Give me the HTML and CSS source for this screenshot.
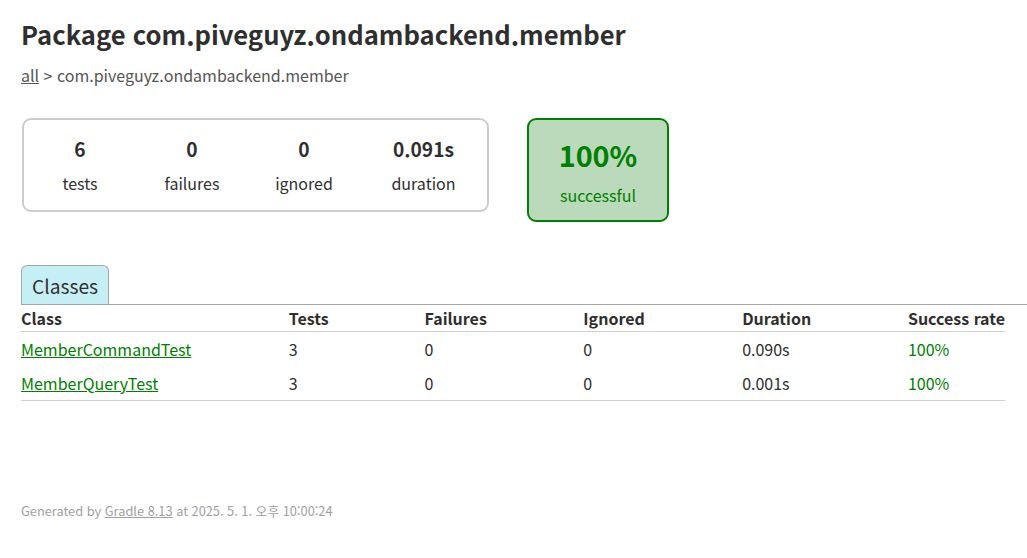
FILE: index.html
```html
<!DOCTYPE html>
<html lang="ko">
<head>
<meta charset="utf-8">
<title>Test results - Package com.piveguyz.ondambackend.member</title>
<link rel="stylesheet" href="styles.css">
</head>
<body>
<div class="content">
  <h1 class="title">Package com.piveguyz.ondambackend.member</h1>
  <div class="breadcrumbs"><a href="#">all</a> &gt; com.piveguyz.ondambackend.member</div>
  <div class="summary">
    <div class="summary-box">
      <div class="counter"><div class="num">6</div><p class="label">tests</p></div>
      <div class="counter"><div class="num">0</div><p class="label">failures</p></div>
      <div class="counter"><div class="num">0</div><p class="label">ignored</p></div>
      <div class="counter wide"><div class="num">0.091s</div><p class="label">duration</p></div>
    </div>
    <div class="success-box">
      <div class="percent">100%</div>
      <p class="label">successful</p>
    </div>
  </div>
  <div class="tabs">
    <div class="tab-bar"><span class="tab">Classes</span></div>
    <table class="results">
      <thead>
        <tr><th>Class</th><th>Tests</th><th>Failures</th><th>Ignored</th><th>Duration</th><th>Success rate</th></tr>
      </thead>
      <tbody>
        <tr><td><a class="ok" href="#">MemberCommandTest</a></td><td>3</td><td>0</td><td>0</td><td>0.090s</td><td class="ok">100%</td></tr>
        <tr><td><a class="ok" href="#">MemberQueryTest</a></td><td>3</td><td>0</td><td>0</td><td>0.001s</td><td class="ok">100%</td></tr>
      </tbody>
    </table>
  </div>
  <div class="footer">Generated by <a href="#">Gradle 8.13</a> at 2025. 5. 1. 오후 10:00:24</div>
</div>
</body>
</html>
```
FILE: styles.css
```css
html, body {
  margin: 0;
  padding: 0;
  background: #fff;
}

body {
  font-family: "Noto Sans CJK KR", "Noto Sans", sans-serif;
  font-size: 16px;
  color: #2f2f2f;
}

.content {
  padding: 14px 0 0 21px;
}

.title {
  margin: 0;
  font-size: 25.6px;
  line-height: 40px;
  font-weight: 700;
  white-space: nowrap;
}

.breadcrumbs {
  margin-top: 10px;
  line-height: 22px;
  color: #555;
}

.breadcrumbs a {
  color: #555;
}

.summary {
  display: flex;
  align-items: flex-start;
  gap: 38px;
  margin-top: 32px;
  margin-left: 1px;
}

.summary-box {
  display: flex;
  width: 463px;
  height: 90px;
  border: 2px solid #cccccc;
  border-radius: 9px;
}

.counter {
  width: 112px;
  text-align: center;
}

.counter.wide {
  width: 127px;
}

.num {
  margin-top: 15px;
  font-size: 19.2px;
  line-height: 28px;
  font-weight: 700;
}

.label {
  margin: 9px 0 0;
  line-height: 22px;
}

.success-box {
  width: 138px;
  height: 100px;
  border: 2px solid #008000;
  border-radius: 9px;
  background: #bbd9bb;
  color: #008000;
  text-align: center;
}

.percent {
  margin-top: 17px;
  font-size: 28.8px;
  line-height: 36px;
  font-weight: 700;
}

.success-box .label {
  margin-top: 11px;
}

.tabs {
  margin-top: 43px;
}

.tab-bar {
  display: flex;
  border-bottom: 1px solid #a8a8a8;
}

.tab {
  display: block;
  height: 38px;
  padding: 0 10px;
  border: 1px solid #a8a8a8;
  border-bottom: none;
  border-radius: 6px 6px 0 0;
  background: #c6eff5;
  font-size: 19.2px;
  line-height: 40px;
}

.results {
  border-collapse: collapse;
  width: 984px;
  border-bottom: 1px solid #d0d0d0;
}

.results th {
  text-align: left;
  font-weight: 700;
  white-space: nowrap;
  padding: 2px 0 2px;
  line-height: 22px;
  border-bottom: 1px solid #d0d0d0;
}

.results td {
  white-space: nowrap;
  padding: 5px 0;
  line-height: 24px;
}

.results th:nth-child(1), .results td:nth-child(1) { width: 268px; }
.results th:nth-child(2), .results td:nth-child(2) { width: 136px; }
.results th:nth-child(3), .results td:nth-child(3) { width: 159px; }
.results th:nth-child(4), .results td:nth-child(4) { width: 159px; }
.results th:nth-child(5), .results td:nth-child(5) { width: 166px; }

.ok {
  color: #008000;
}

a.ok {
  color: #008000;
}

.footer {
  margin-top: 101px;
  font-size: 12.8px;
  line-height: 18px;
  color: #a0a0a0;
  white-space: nowrap;
}

.footer a {
  color: #a0a0a0;
}
```
